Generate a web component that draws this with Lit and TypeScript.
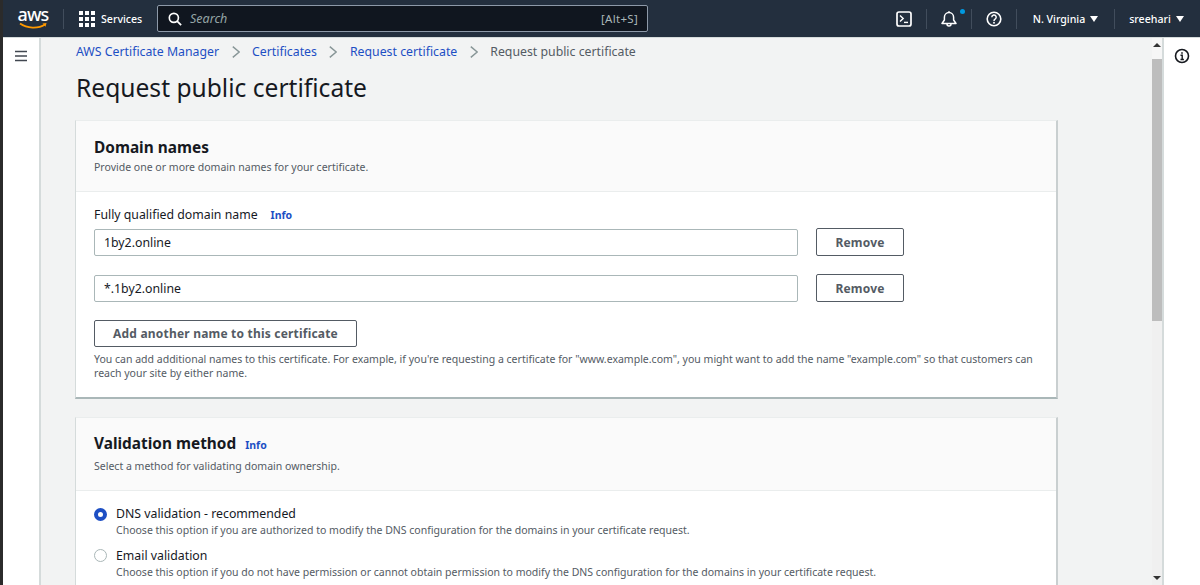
import { LitElement, html, css, svg } from "lit";
import { customElement } from "lit/decorators.js";

const FONT = css`"Noto Sans", "Open Sans", sans-serif`;

@customElement("app-root")
export class AppRoot extends LitElement {
  static styles = css`
    :host { display: block; width: 1200px; height: 585px; overflow: hidden; font-family: ${FONT}; background: #fff; color: #16191f; }
    * { box-sizing: border-box; }
    a { text-decoration: none; }
    svg { display: block; flex: none; }
    .shell { display: flex; height: 585px; }
    .edge { width: 3px; background: #2b2b2b; flex: none; }
    .main { flex: 1; min-width: 0; display: flex; flex-direction: column; }
    .top { height: 37px; flex: none; background: #232f3e; display: flex; align-items: center; color: #fff; font-size: 10.6px; }
    .logo { width: 44px; margin: 0 8px; display: flex; flex-direction: column; align-items: center; height: 30px; flex: none; }
    .logo span { font-size: 18px; line-height: 16px; font-weight: 500; margin-top: 2px; letter-spacing: -.9px; }
    .logo svg { margin-top: 0; }
    .sep { width: 1px; height: 20px; background: #414d5c; flex: none; }
    .grid { display: grid; grid-template-columns: repeat(3, 4px); gap: 2px; margin-left: 15px; flex: none; }
    .grid i { width: 4px; height: 4px; background: #fff; display: block; }
    .svc { margin-left: 6px; width: 56px; flex: none; font-weight: 500; }
    .search { width: 491px; height: 27px; flex: none; border: 1px solid #8d99a8; border-radius: 2px; display: flex; align-items: center; padding: 0 9px 0 10px; background: #10161f; }
    .search em { color: #95a5a6; margin-left: 8px; font-size: 12.5px; flex: 1; }
    .search b { font-weight: 400; color: #aab7b8; font-size: 11.5px; letter-spacing: .3px; }
    .right { margin-left: auto; display: flex; align-items: center; height: 37px; }
    .ic { display: flex; align-items: center; justify-content: center; width: 44px; position: relative; }
    .ic.term { width: 45px; }
    .dot { position: absolute; width: 5px; height: 5px; border-radius: 50%; background: #0099e0; right: 6px; top: -2px; }
    .menu { display: flex; align-items: center; justify-content: center; gap: 5px; font-weight: 500; }
    .menu.region { width: 97px; }
    .menu.user { width: 85px; padding-right: 2px; }
    .tri { width: 0; height: 0; border-left: 4px solid transparent; border-right: 4px solid transparent; border-top: 6px solid #fff; }
    .body { flex: 1; min-height: 0; display: flex; border-top: 1px solid #d5dbdb; }
    .nav { width: 38px; flex: none; background: #fff; border-right: 2px solid #d5dbdb; padding: 12px 0 0 11px; }
    .content { flex: 1; min-width: 0; background: #f2f3f3; padding: 0 0 0 35px; overflow: hidden; }
    .crumbs { display: flex; align-items: center; height: 27px; font-size: 12.3px; }
    .crumbs a { color: #1d4fc4; }
    .crumbs span { color: #545b64; }
    .crumbs svg { margin: 0 12.5px; }
    h1 { margin: 5px 0 14px; font-size: 24.6px; line-height: 36px; font-weight: 400; color: #16191f; }
    .card { width: 983px; margin-left: -1px; background: #fff; border-top: 1px solid #eaeded; border-right: 2px solid #c9cfd0; border-left: 1px solid #d5dbdb; border-bottom: 2px solid #aab7b8; margin-bottom: 18px; }
    .head { background: #fafafa; border-bottom: 1px solid #eaeded; padding: 15px 18px 0; height: 71px; }
    .head.v { height: 73px; padding-top: 14px; }
    .head h2 { margin: 0; font-size: 15.4px; line-height: 24px; font-weight: 700; display: flex; align-items: baseline; gap: 9px; }
    .head p { margin: 0; font-size: 10.53px; line-height: 14px; color: #545b64; }
    .head.v p { margin-top: 2px; }
    .info { color: #1d4fc4; font-size: 10.5px; font-weight: 700; }
    .sec { padding: 13px 18px 0; }
    .sec.v { padding-top: 14px; }
    .lab { font-size: 12.3px; line-height: 20px; display: flex; gap: 13px; align-items: center; color: #16191f; }
    .row { display: flex; align-items: center; margin-top: 3px; margin-bottom: 18px; }
    .row + .row { margin-top: 0; margin-bottom: 18px; }
    .inp { width: 704px; height: 27px; border: 1px solid #aab7b8; border-radius: 2px; padding-left: 9px; font-size: 12.3px; line-height: 26px; color: #16191f; }
    .btn { display: block; border: 1px solid #545b64; border-radius: 2px; background: #fff; color: #545b64; font-family: inherit; font-size: 12px; font-weight: 700; height: 28px; padding: 0; letter-spacing: .2px; }
    .rm { width: 88px; margin-left: 18px; }
    .add { width: 263px; height: 27px; }
    .note { font-size: 10.53px; line-height: 14px; color: #545b64; margin: 5px 0 0; width: 945px; padding-bottom: 17px; }
    .opt { display: grid; grid-template-columns: 22px 1fr; }
    .radio { width: 13px; height: 13px; border-radius: 50%; border: 1px solid #aab7b8; margin-top: 2.5px; background: #fff; }
    .radio.on { border: 4px solid #1d4fc4; }
    .opt b { font-weight: 400; font-size: 12.3px; line-height: 18px; display: block; }
    .opt small { font-size: 10.53px; line-height: 14px; display: block; color: #545b64; margin-bottom: 9.5px; }
    .sb { width: 12px; flex: none; background: #f0f0f0; position: relative; border-right: 2px solid #d5dbdb; }
    .cap { position: absolute; left: 0; right: 0; top: 0; height: 21px; background: #f6f6f6; }
    .thumb { position: absolute; left: 0; right: 0; top: 21px; height: 262px; background: #bdbdbd; }
    .up, .dn { position: absolute; left: 1px; width: 0; height: 0; border-left: 4px solid transparent; border-right: 4px solid transparent; }
    .up { top: 5px; border-bottom: 4px solid #333; }
    .dn { bottom: 5px; border-top: 4px solid #333; }
    .tools { width: 36px; flex: none; background: #fff; display: flex; justify-content: center; padding-top: 10px; }
  `;

  sep() { return html`<div class="sep"></div>`; }
  chev() {
    return svg`<svg width="8" height="12" viewBox="0 0 8 12"><path d="M.8.6l6.4 5.4-6.4 5.4" fill="none" stroke="#879596" stroke-width="1.4"/></svg>`;
  }

  render() {
    return html`
      <div class="shell">
        <div class="edge"></div>
        <div class="main">
          <header class="top">
            <div class="logo"><span>aws</span>
              <svg width="29" height="8" viewBox="0 0 29 8"><path d="M1 1.5C8 6.5 19 7 26 2.5" fill="none" stroke="#f90" stroke-width="1.7"/><path d="M23.5 1.5l4-.5-1 3.8z" fill="#f90"/></svg>
            </div>
            ${this.sep()}
            <div class="grid">${Array.from({ length: 9 }, () => html`<i></i>`)}</div>
            <div class="svc">Services</div>
            <div class="search">
              <svg width="14" height="14" viewBox="0 0 16 16"><circle cx="6.7" cy="6.7" r="5.2" fill="none" stroke="#fff" stroke-width="1.9"/><path d="M10.4 10.4L15 15" stroke="#fff" stroke-width="2"/></svg>
              <em>Search</em><b>[Alt+S]</b>
            </div>
            <div class="right">
              <div class="ic term"><svg width="16" height="16" viewBox="0 0 16 16"><rect x="1" y="1" width="14" height="14" rx="2" fill="none" stroke="#fff" stroke-width="1.7"/><path d="M4 4.6L7.2 7.6 4 10.6" fill="none" stroke="#fff" stroke-width="1.4"/><path d="M8 11.4h4" stroke="#fff" stroke-width="1.4"/></svg></div>
              ${this.sep()}
              <div class="ic"><svg width="16" height="16" viewBox="0 0 16 16"><path d="M1 12.5h14L12.6 9V6.2a4.6 4.6 0 0 0-9.2 0V9z" fill="none" stroke="#fff" stroke-width="1.5" stroke-linejoin="round"/><path d="M8 .2v1.4" stroke="#fff" stroke-width="1.5"/><path d="M6 13a2 2 0 0 0 4 0" fill="none" stroke="#fff" stroke-width="1.5"/></svg><span class="dot"></span></div>
              ${this.sep()}
              <div class="ic"><svg width="16" height="16" viewBox="0 0 16 16"><circle cx="8" cy="8" r="6.8" fill="none" stroke="#fff" stroke-width="1.6"/><path d="M5.8 6.2a2.2 2.2 0 1 1 3.3 1.9c-.8.5-1.1.9-1.1 1.8" fill="none" stroke="#fff" stroke-width="1.5"/><circle cx="8" cy="11.7" r=".95" fill="#fff"/></svg></div>
              ${this.sep()}
              <div class="menu region">N. Virginia <span class="tri"></span></div>
              ${this.sep()}
              <div class="menu user">sreehari <span class="tri"></span></div>
            </div>
          </header>
          <div class="body">
            <aside class="nav"><svg width="14" height="12" viewBox="0 0 14 12"><path d="M1 1.5h12M1 6h12M1 10.5h12" stroke="#414750" stroke-width="1.6"/></svg></aside>
            <main class="content">
              <nav class="crumbs">
                <a>AWS Certificate Manager</a>${this.chev()}<a>Certificates</a>${this.chev()}<a>Request certificate</a>${this.chev()}<span>Request public certificate</span>
              </nav>
              <h1>Request public certificate</h1>
              <section class="card">
                <div class="head"><h2>Domain names</h2><p>Provide one or more domain names for your certificate.</p></div>
                <div class="sec">
                  <div class="lab">Fully qualified domain name <a class="info">Info</a></div>
                  <div class="row"><div class="inp">1by2.online</div><button class="btn rm">Remove</button></div>
                  <div class="row"><div class="inp">*.1by2.online</div><button class="btn rm">Remove</button></div>
                  <button class="btn add">Add another name to this certificate</button>
                  <p class="note">You can add additional names to this certificate. For example, if you're requesting a certificate for "www.example.com", you might want to add the name "example.com" so that customers can reach your site by either name.</p>
                </div>
              </section>
              <section class="card">
                <div class="head v"><h2>Validation method <a class="info">Info</a></h2><p>Select a method for validating domain ownership.</p></div>
                <div class="sec v">
                  <div class="opt"><div class="radio on"></div><div><b>DNS validation - recommended</b><small>Choose this option if you are authorized to modify the DNS configuration for the domains in your certificate request.</small></div></div>
                  <div class="opt"><div class="radio"></div><div><b>Email validation</b><small>Choose this option if you do not have permission or cannot obtain permission to modify the DNS configuration for the domains in your certificate request.</small></div></div>
                </div>
              </section>
            </main>
            <div class="sb"><div class="cap"></div><div class="up"></div><div class="thumb"></div><div class="dn"></div></div>
            <aside class="tools"><svg width="16" height="16" viewBox="0 0 16 16"><circle cx="8" cy="8" r="6.5" fill="none" stroke="#16191f" stroke-width="1.6"/><path d="M6.5 7.3H8.2V11.5M6.5 11.5h3.4" fill="none" stroke="#16191f" stroke-width="1.4"/><path d="M7.2 4.2h1.6v1.6H7.2z" fill="#16191f"/></svg></aside>
          </div>
        </div>
      </div>
    `;
  }
}
